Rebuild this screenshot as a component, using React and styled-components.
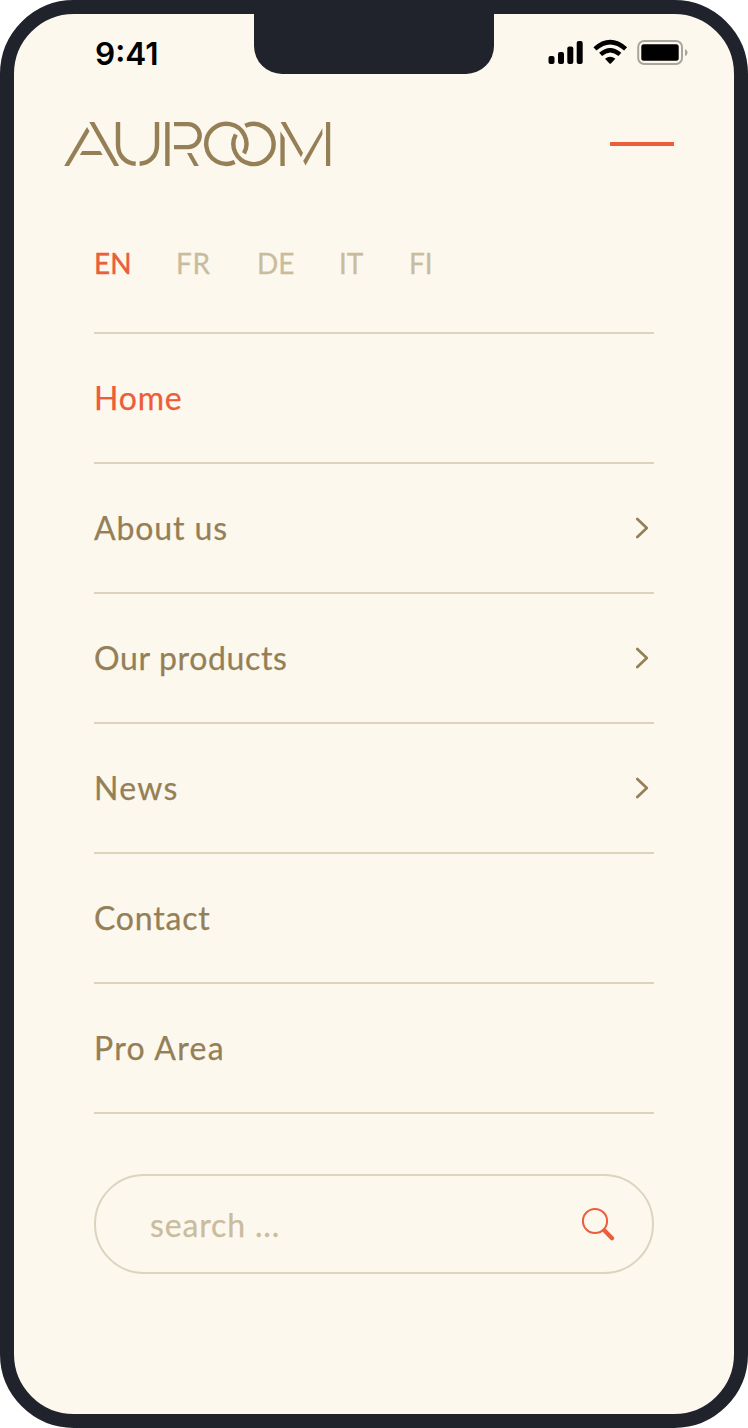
import React from "react"
import styled, { createGlobalStyle } from 'styled-components'

const GlobalStyle = createGlobalStyle`
  * {
    box-sizing: border-box;
  }
  body {
    margin: 0;
    background: #fff;
  }
`

const Phone = styled.div`
  position: relative;
  width: 748px;
  height: 1428px;
  border: 14px solid #20232c;
  border-radius: 74px;
  background: #fdf8ed;
  font-family: Lato, 'Open Sans', sans-serif;
  color: #957f56;
`

const Notch = styled.div`
  position: absolute;
  top: -1px;
  left: 240px;
  width: 240px;
  height: 61px;
  border-radius: 0 0 28px 28px;
  background: #20232c;
`

const StatusBar = styled.div`
  display: flex;
  justify-content: space-between;
  align-items: center;
  height: 78px;
  padding: 0 46px 0 81px;
`

const Time = styled.span`
  padding-top: 1px;
  font-family: Inter, sans-serif;
  font-size: 31.5px;
  font-weight: 600;
  letter-spacing: 0;
  color: #000;
`

const Header = styled.header`
  display: flex;
  justify-content: space-between;
  align-items: center;
  height: 104px;
  padding: 0 60px 0 50px;
`

const MenuToggle = styled.button`
  width: 64px;
  height: 4px;
  padding: 0;
  border: none;
  background: #ec5d3a;
  cursor: pointer;
`

const Content = styled.main`
  padding: 0 80px;
`

const Languages = styled.div`
  display: flex;
  align-items: center;
  height: 138px;
  padding-bottom: 2px;
  border-bottom: 2px solid #dbd4bf;
`

const Language = styled.a`
  width: ${props => props.$width}px;
  font-size: 28px;
  line-height: 36px;
  letter-spacing: ${props => props.$spacing || 0}px;
  color: ${props => props.$active ? '#ec5d3a' : '#c9bc9e'};
  -webkit-text-stroke: ${props => props.$active ? '0.4px' : '0.3px'};
`

const MenuItem = styled.a`
  display: flex;
  justify-content: space-between;
  align-items: center;
  height: 130px;
  padding-right: 4px;
  border-bottom: 2px solid #ddd3bd;
  font-size: 32px;
  line-height: 40px;
  color: ${props => props.$active ? '#ec5d3a' : '#957f56'};
`

const Label = styled.span`
  letter-spacing: ${props => props.$spacing}px;
  -webkit-text-stroke: 0.25px;
`

const Search = styled.div`
  display: flex;
  justify-content: space-between;
  align-items: center;
  height: 100px;
  margin-top: 60px;
  padding: 0 36px 0 54px;
  border: 2px solid #dbd4bf;
  border-radius: 50px;
  font-size: 32px;
  color: #c9bc9e;
`

const languages = [
  { name: 'EN', width: 82, active: true },
  { name: 'FR', width: 81, spacing: 0.6 },
  { name: 'DE', width: 82 },
  { name: 'IT', width: 70 },
  { name: 'FI', width: 40 },
]

const items = [
  { name: 'Home', spacing: 0.8, active: true },
  { name: 'About us', spacing: 0.9, more: true },
  { name: 'Our products', spacing: 0.65, more: true },
  { name: 'News', spacing: 1.3, more: true },
  { name: 'Contact', spacing: 0.8 },
  { name: 'Pro Area', spacing: 1.3 },
]

const StatusIcons = () => (
  <svg width="140" height="28" viewBox="548 39 140 28">
    <rect x="548.5" y="56" width="6" height="8" rx="2" />
    <rect x="558" y="52" width="6" height="12" rx="2" />
    <rect x="567.3" y="46.5" width="6" height="17.5" rx="2" />
    <rect x="576.7" y="41" width="6" height="23" rx="2" />
    <path d="M594.9 48.9Q610.2 35.3 625.6 48.9M600.6 54.4Q610.2 46.1 619.9 54.4" fill="none" stroke="#000" strokeWidth="4.5" />
    <path d="M605 58.8Q610.2 54.8 615.4 58.8L610.9 63.4Q610.2 64 609.5 63.4Z" />
    <rect x="638.2" y="41" width="43.8" height="23" rx="6" fill="none" stroke="#a9a69e" strokeWidth="2" />
    <rect x="641.3" y="44.3" width="37.4" height="16.4" rx="2.5" />
    <path d="M685 49q2.6 1.2 2.6 3.5t-2.6 3.5z" fill="#a9a69e" />
  </svg>
)

const Logo = () => (
  <svg width="267" height="46" viewBox="64 121 267 46" fill="#957f56">
    <path d="M64.2 166L87 127L89.5 131.3L69 166Z" />
    <path d="M89.3 122H94.3L119.2 166H114.2Z" />
    <path d="M82.2 151H100.3L102.7 155H79.9Z" />
    <path d="M165.2 122h4.4v44h-4.4zM326 122h4.2v44H326z" />
    <path d="M187 153H191.5L198.8 166H194.2Z" />
    <g fill="none" stroke="#957f56" strokeWidth="4.4">
      <path d="M118 122V145C118 156 126 163.3 135.7 163.8" />
      <path d="M157 122V145C157 156 149.5 163.3 139.6 163.8" />
      <path d="M174 124.1H188.2a11.5 11.5 0 0 1 0 23H174" />
      <path d="M234.7 162.1A20.1 20.1 0 1 1 244 153.4" />
      <path d="M245.2 125.7A20.1 20.1 0 1 1 235.8 134.5" />
    </g>
    <path d="M280.4 131.5L284.7 138V166H280.4Z" />
    <path d="M280.6 122H285.6L303 152.9L301 157.3Z" />
    <path d="M322.4 128.3V134.7L305.6 165.6L303.2 161Z" />
  </svg>
)

const Chevron = () => (
  <svg width="16" height="24" viewBox="0 0 16 24">
    <path d="M3.3 3L12.8 12L3.3 21" fill="none" stroke="#957f56" strokeWidth="2.7" strokeLinecap="round" strokeLinejoin="round" />
  </svg>
)

const SearchIcon = () => (
  <svg width="35" height="34" viewBox="581 1207 35 34" fill="none" stroke="#ec5d3a" strokeLinecap="round">
    <circle cx="595" cy="1221" r="12.1" strokeWidth="2" />
    <path d="M604.5 1230.5L612 1238.2" strokeWidth="4.2" />
  </svg>
)

export const App = () => {

  return (
    <>
      <GlobalStyle />
      <Phone>
        <Notch />
        <StatusBar>
          <Time>9:41</Time>
          <StatusIcons />
        </StatusBar>
        <Header>
          <Logo />
          <MenuToggle aria-label="Close menu" />
        </Header>
        <Content>
          <Languages>
            {languages.map(({ name, width, spacing, active }) => (
              <Language key={name} $width={width} $spacing={spacing} $active={active}>{name}</Language>
            ))}
          </Languages>
          <nav>
            {items.map(({ name, spacing, active, more }) => (
              <MenuItem key={name} $active={active}>
                <Label $spacing={spacing}>{name}</Label>
                {more && <Chevron />}
              </MenuItem>
            ))}
          </nav>
          <Search>
            <Label $spacing={0.85}>search ...</Label>
            <SearchIcon />
          </Search>
        </Content>
      </Phone>
    </>
  )
}

export default App
